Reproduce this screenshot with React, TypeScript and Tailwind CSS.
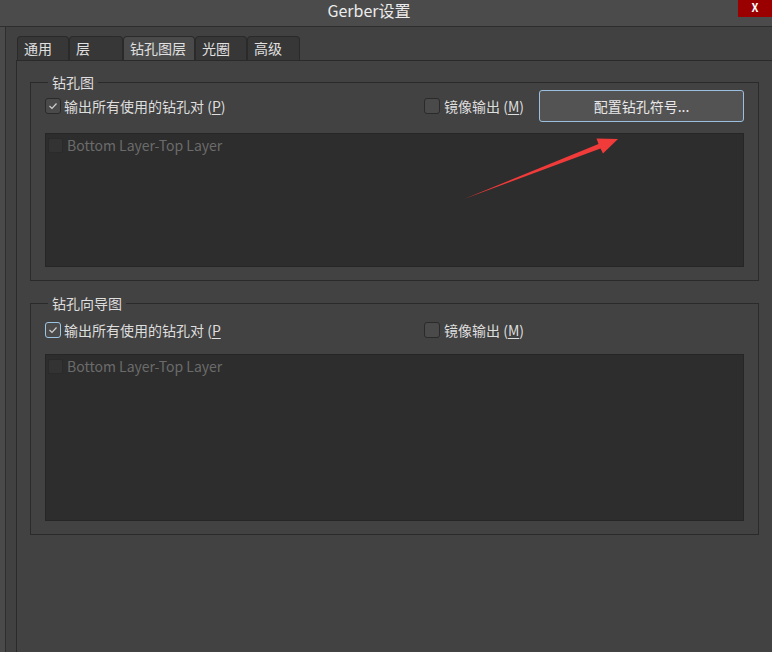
import type { ReactNode } from "react";

const FONT = { fontFamily: '"Noto Sans CJK SC", "Noto Sans", sans-serif' };

const tabs = [
  { label: "通用", w: "w-[52px]" },
  { label: "层", w: "w-[54px]" },
  { label: "钻孔图层", w: "w-[72px]", active: true },
  { label: "光圈", w: "w-[52px]" },
  { label: "高级", w: "w-[53px]" },
];

function Check({ checked, focused }: { checked?: boolean; focused?: boolean }) {
  return (
    <span
      className={`flex h-[16px] w-[16px] shrink-0 items-center justify-center rounded-[3px] border bg-[#4a4a4a] ${
        focused ? "border-[#9cc4e4]" : "border-[#2a2a2a]"
      }`}
    >
      {checked && (
        <svg width="10" height="8" viewBox="0 0 10 8">
          <polyline points="1.5,4 4,6.5 8.5,1.5" fill="none" stroke="#d0d0d0" strokeWidth="1.2" />
        </svg>
      )}
    </span>
  );
}

function Mnemonic({ children }: { children: ReactNode }) {
  return <span className="underline underline-offset-2">{children}</span>;
}

function LayerList({ h }: { h: string }) {
  return (
    <div className={`${h} border border-[#262626] bg-[#2d2d2d] pl-[2px] pt-[2px]`}>
      <div className="flex items-center gap-[4px]">
        <span className="h-[15px] w-[15px] rounded-[2px] border border-[#2a2a2a] bg-[#333333]" />
        <span className="text-[14px] leading-[18px] text-[#6b6b6b]">Bottom Layer-Top Layer</span>
      </div>
    </div>
  );
}

function Group({
  title,
  focused,
  clipP,
  button,
  listH,
  className,
}: {
  title: string;
  focused?: boolean;
  clipP?: boolean;
  button?: boolean;
  listH: string;
  className?: string;
}) {
  return (
    <fieldset className={`mx-[13px] border border-[#2a2a2a] px-[14px] pb-[13px] ${className ?? ""}`}>
      <legend className="ml-[3px] px-[4px] text-[14px] leading-[16px] text-[#dedede]">{title}</legend>
      <div className={`flex h-[32px] items-center ${button ? "" : "mt-[3px]"}`}>
        <label className="flex w-[379px] items-center gap-[3px] text-[14px] text-[#dedede]">
          <Check checked focused={focused} />
          <span className="whitespace-nowrap">
            输出所有使用的钻孔对 {clipP ? <>(<Mnemonic>P</Mnemonic></> : <>(<Mnemonic>P</Mnemonic>)</>}
          </span>
        </label>
        <label className="flex items-center gap-[4px] text-[14px] text-[#dedede]">
          <Check />
          <span>
            镜像输出 (<Mnemonic>M</Mnemonic>)
          </span>
        </label>
        {button && (
          <button className="ml-auto h-[32px] w-[205px] rounded-[3px] border border-[#9cbfdf] bg-[#535353] text-[14px] text-[#e8e8e8]">
            配置钻孔符号...
          </button>
        )}
      </div>
      <div className={button ? "mt-[11px]" : "mt-[8px]"}>
        <LayerList h={listH} />
      </div>
    </fieldset>
  );
}

export default function App() {
  return (
    <div className="relative h-[652px] w-[772px] overflow-hidden bg-[#414141]" style={FONT}>
      <div className="flex h-[27px] border-b border-[#2e2e2e] bg-[#4b4b4b]">
        <div className="flex w-[738px] justify-center text-[16px] leading-[20px] text-[#ececec]">Gerber设置</div>
        <div className="flex h-[17px] flex-1 items-start justify-center bg-[#9b0000] text-[11px] font-bold leading-[14px] text-white">
          X
        </div>
      </div>

      <div className="flex h-[625px]">
        <div className="w-[6px] shrink-0 border-r border-[#2e2e2e] bg-[#4a4a4a]" />
        <div className="flex-1 pl-[10px] pt-[9px]">
          <div className="flex pl-[1px]">
            {tabs.map((t) => (
              <div
                key={t.label}
                className={`flex h-[24px] items-center rounded-t-[4px] border border-b-0 border-[#2a2a2a] pl-[6px] text-[14px] text-[#e0e0e0] ${t.w} ${
                  t.active ? "bg-[#4a4a4a]" : "bg-[#373737]"
                }`}
              >
                {t.label}
              </div>
            ))}
          </div>
          <div className="h-[600px] border-l border-t border-[#2a2a2a] bg-[#424242] pt-[13px]">
            <Group title="钻孔图" button listH="h-[134px]" />
            <Group title="钻孔向导图" focused clipP listH="h-[167px]" className="mt-[14px]" />
          </div>
        </div>
      </div>

      <svg className="pointer-events-none absolute left-0 top-0" width="772" height="652" viewBox="0 0 772 652">
        <polygon
          points="464,199 598.5,144 596.5,138.5 618,139 603,153.5 600.5,148.5"
          fill="#f13a3a"
        />
      </svg>
    </div>
  );
}
